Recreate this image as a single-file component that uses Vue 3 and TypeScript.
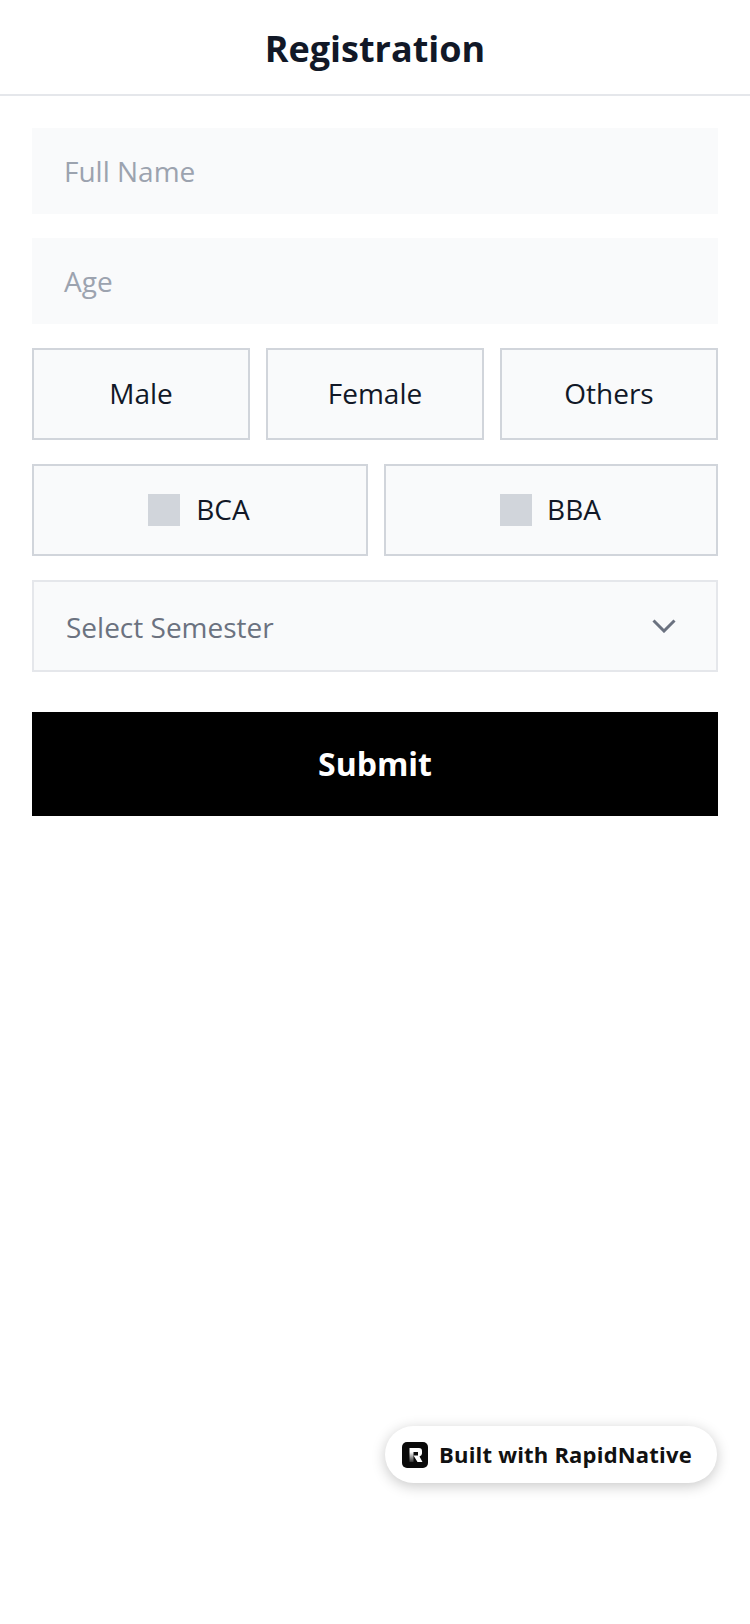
<script setup lang="ts">
const genders = ["Male", "Female", "Others"];
const courses = ["BCA", "BBA"];
</script>

<template>
  <div class="page">
    <header class="header">
      <h1 class="title">Registration</h1>
    </header>

    <main class="form">
      <div class="input">Full Name</div>
      <div class="input">Age</div>

      <div class="row">
        <div v-for="gender in genders" :key="gender" class="option equal">{{ gender }}</div>
      </div>

      <div class="row">
        <div v-for="course in courses" :key="course" class="option course">
          <span class="check"></span>
          <span>{{ course }}</span>
        </div>
      </div>

      <div class="select">
        <span>Select Semester</span>
        <svg class="chevron" width="24" height="14" viewBox="0 0 24 14" fill="none">
          <path d="M1.5 1.5L12 12L22.5 1.5" stroke="#6b7280" stroke-width="3" />
        </svg>
      </div>

      <div class="submit">Submit</div>
    </main>

    <div class="badge">
      <svg class="logo" width="26" height="26" viewBox="0 0 26 26">
        <defs>
          <linearGradient id="stem" x1="0" y1="0" x2="0" y2="1">
            <stop offset="0" stop-color="#ffffff" />
            <stop offset="1" stop-color="#333333" />
          </linearGradient>
        </defs>
        <rect width="26" height="26" rx="5" fill="#0a0a0a" />
        <path d="M7.5 10H11.5V20H7.5Z" fill="url(#stem)" />
        <path d="M7.5 6H17Q20 6 20 9V11.5Q20 13.5 17.5 14.5L20.5 20H15.5L11.5 13.5H16V10H7.5Z" fill="#fff" />
      </svg>
      <span>Built with RapidNative</span>
    </div>
  </div>
</template>

<style>
html,
body {
  margin: 0;
  background: #fff;
}
</style>

<style scoped>
.page {
  position: relative;
  width: 750px;
  height: 1624px;
  overflow: hidden;
  background: #fff;
  font-family: "Open Sans", sans-serif;
}

.header {
  box-sizing: border-box;
  height: 96px;
  padding-top: 2px;
  display: flex;
  align-items: center;
  justify-content: center;
  border-bottom: 2px solid #e5e7eb;
}

.title {
  margin: 0;
  font-size: 36px;
  font-weight: 700;
  color: #111827;
}

.form {
  display: flex;
  flex-direction: column;
  gap: 24px;
  padding: 32px 32px 0;
}

.input {
  height: 86px;
  padding: 0 32px;
  display: flex;
  align-items: center;
  background: #f9fafb;
  font-size: 28px;
  color: #9ca3af;
}

.row {
  display: flex;
  gap: 16px;
}

.option {
  box-sizing: border-box;
  height: 92px;
  padding-bottom: 2px;
  display: flex;
  align-items: center;
  justify-content: center;
  gap: 16px;
  background: #f9fafb;
  border: 2px solid #d1d5db;
  font-size: 28px;
  color: #111827;
}

.option.equal {
  flex: 1 1 0;
}

.option.course {
  flex: 1 1 334px;
  gap: 15px;
  padding-right: 1px;
}

.option.course:first-child {
  flex: 0 0 336px;
  gap: 16px;
  padding-right: 2px;
}

.check {
  width: 32px;
  height: 32px;
  margin-top: 2px;
  background: #d1d5db;
}

.select {
  box-sizing: border-box;
  height: 92px;
  padding: 2px 40px 0 32px;
  display: flex;
  align-items: center;
  justify-content: space-between;
  background: #f9fafb;
  border: 2px solid #e5e7eb;
  font-size: 28px;
  color: #6b7280;
}

.chevron {
  margin-top: -2px;
}

.submit {
  box-sizing: border-box;
  height: 104px;
  margin-top: 16px;
  padding-bottom: 2px;
  display: flex;
  align-items: center;
  justify-content: center;
  background: #000;
  color: #fff;
  font-size: 32px;
  font-weight: 700;
}

.badge {
  position: absolute;
  top: 1426px;
  left: 385px;
  width: 332px;
  height: 57px;
  box-sizing: border-box;
  padding: 0 0 2px 17px;
  display: flex;
  align-items: center;
  gap: 11px;
  background: #fff;
  border-radius: 29px;
  box-shadow: 0 3px 14px rgba(0, 0, 0, 0.22);
  font-size: 22px;
  font-weight: 700;
  letter-spacing: 0.2px;
  color: #111;
}

.logo {
  margin-top: 2px;
}
</style>
